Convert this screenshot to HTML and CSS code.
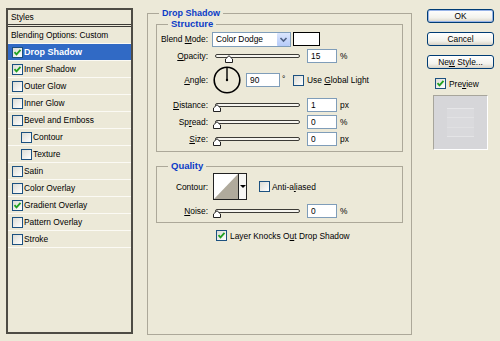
FILE: index.html
```html
<!DOCTYPE html>
<html>
    <head>
        <meta charset="UTF-8">
        <meta name="viewport" content="width=device-width, initial-scale=1.0">
        <title>Layer Style</title>
        <link rel="stylesheet" href="styles.css">
    </head>
    <body>
        <div class="dialog">
            <div class="style-list">
                <div class="list-head">Styles</div>
                <div class="list-row plain">Blending Options: Custom</div>
                <div class="list-row selected"><span class="check"><svg viewBox="0 0 9 9" width="9" height="9"><path d="M1.5 4.2l2 2.2 4-4.6" fill="none" stroke="#21a121" stroke-width="1.8"/></svg></span>Drop Shadow</div>
                <div class="list-row"><span class="check"><svg viewBox="0 0 9 9" width="9" height="9"><path d="M1.5 4.2l2 2.2 4-4.6" fill="none" stroke="#21a121" stroke-width="1.8"/></svg></span>Inner Shadow</div>
                <div class="list-row"><span class="check"></span>Outer Glow</div>
                <div class="list-row"><span class="check"></span>Inner Glow</div>
                <div class="list-row"><span class="check"></span>Bevel and Emboss</div>
                <div class="list-row sub"><span class="check"></span>Contour</div>
                <div class="list-row sub"><span class="check"></span>Texture</div>
                <div class="list-row"><span class="check"></span>Satin</div>
                <div class="list-row"><span class="check"></span>Color Overlay</div>
                <div class="list-row"><span class="check"><svg viewBox="0 0 9 9" width="9" height="9"><path d="M1.5 4.2l2 2.2 4-4.6" fill="none" stroke="#21a121" stroke-width="1.8"/></svg></span>Gradient Overlay</div>
                <div class="list-row"><span class="check"></span>Pattern Overlay</div>
                <div class="list-row"><span class="check"></span>Stroke</div>
            </div>

            <fieldset class="group main">
                <legend>Drop Shadow</legend>

                <fieldset class="group inner structure">
                    <legend>Structure</legend>
                    <div class="rows">
                        <div class="row">
                            <span class="label">Blend <u>M</u>ode:</span>
                            <div class="select">
                                <span class="select-text">Color Dodge</span>
                                <span class="select-arrow"><svg viewBox="0 0 13 13" width="13" height="13"><path d="M3.5 5l3 3 3-3" fill="none" stroke="#4d6185" stroke-width="1.6"/></svg></span>
                            </div>
                            <span class="swatch"></span>
                        </div>
                        <div class="row">
                            <span class="label"><u>O</u>pacity:</span>
                            <div class="slider"><span class="thumb" style="left: 9px"><svg viewBox="0 0 8 8" width="8" height="8"><path d="M0.5 7.5V4L4 0.7 7.5 4v3.5z" fill="#fff" stroke="#222"/></svg></span></div>
                            <input class="field" type="text" value="15">
                            <span class="unit">%</span>
                        </div>
                        <div class="row angle-row">
                            <span class="label"><u>A</u>ngle:</span>
                            <svg class="dial" viewBox="0 0 28 28" width="28" height="28"><circle cx="14" cy="14" r="12.8" fill="none" stroke="#000" stroke-width="1.6"/><path d="M14 14V2" stroke="#000" stroke-width="1.4"/><circle cx="14" cy="14" r="1.2" fill="#000"/></svg>
                            <input class="field wide" type="text" value="90">
                            <span class="deg">°</span>
                            <span class="check"></span>
                            <span class="check-text">Use <u>G</u>lobal Light</span>
                        </div>
                        <div class="row tall">
                            <span class="label"><u>D</u>istance:</span>
                            <div class="slider"><span class="thumb" style="left: -3px"><svg viewBox="0 0 8 8" width="8" height="8"><path d="M0.5 7.5V4L4 0.7 7.5 4v3.5z" fill="#fff" stroke="#222"/></svg></span></div>
                            <input class="field" type="text" value="1">
                            <span class="unit">px</span>
                        </div>
                        <div class="row">
                            <span class="label">Sp<u>r</u>ead:</span>
                            <div class="slider"><span class="thumb" style="left: -3px"><svg viewBox="0 0 8 8" width="8" height="8"><path d="M0.5 7.5V4L4 0.7 7.5 4v3.5z" fill="#fff" stroke="#222"/></svg></span></div>
                            <input class="field" type="text" value="0">
                            <span class="unit">%</span>
                        </div>
                        <div class="row">
                            <span class="label"><u>S</u>ize:</span>
                            <div class="slider"><span class="thumb" style="left: -3px"><svg viewBox="0 0 8 8" width="8" height="8"><path d="M0.5 7.5V4L4 0.7 7.5 4v3.5z" fill="#fff" stroke="#222"/></svg></span></div>
                            <input class="field" type="text" value="0">
                            <span class="unit">px</span>
                        </div>
                    </div>
                </fieldset>

                <fieldset class="group inner quality">
                    <legend>Quality</legend>
                    <div class="rows">
                        <div class="row contour-row">
                            <span class="label">Contour:</span>
                            <div class="contour">
                                <svg viewBox="0 0 24 25" width="24" height="25"><path d="M0 25L24 0V25z" fill="#b0aa9c"/></svg>
                                <span class="contour-drop"><svg viewBox="0 0 8 4" width="6" height="3"><path d="M0 0h8L4 4z" fill="#000"/></svg></span>
                            </div>
                            <span class="check aa"></span>
                            <span class="check-text">Anti-a<u>l</u>iased</span>
                        </div>
                        <div class="row noise-row">
                            <span class="label"><u>N</u>oise:</span>
                            <div class="slider"><span class="thumb" style="left: -3px"><svg viewBox="0 0 8 8" width="8" height="8"><path d="M0.5 7.5V4L4 0.7 7.5 4v3.5z" fill="#fff" stroke="#222"/></svg></span></div>
                            <input class="field" type="text" value="0">
                            <span class="unit">%</span>
                        </div>
                    </div>
                </fieldset>

                <div class="knock">
                    <span class="check"><svg viewBox="0 0 9 9" width="9" height="9"><path d="M1.5 4.2l2 2.2 4-4.6" fill="none" stroke="#21a121" stroke-width="1.8"/></svg></span>
                    <span class="check-text">Layer Knocks O<u>u</u>t Drop Shadow</span>
                </div>
            </fieldset>

            <div class="actions">
                <button class="btn default">OK</button>
                <button class="btn">Cancel</button>
                <button class="btn">Ne<u>w</u> Style...</button>
                <div class="preview-toggle">
                    <span class="check"><svg viewBox="0 0 9 9" width="9" height="9"><path d="M1.5 4.2l2 2.2 4-4.6" fill="none" stroke="#21a121" stroke-width="1.8"/></svg></span>
                    <span class="check-text">Pre<u>v</u>iew</span>
                </div>
                <div class="preview">
                    <div class="preview-swatch"></div>
                </div>
            </div>
        </div>
    </body>
</html>
```

FILE: styles.css
```css
body {
    margin: 0;
    background-color: #ece9d8;
    font-family: "Liberation Sans", Arial, sans-serif;
    font-size: 8.4px;
    color: #000;
}

u {
    text-decoration-thickness: 1px;
    text-underline-offset: 1px;
}

.dialog {
    display: flex;
    align-items: flex-start;
    padding: 7px 0 0 6px;
}

/* style list on the left */
.style-list {
    width: 127px;
    height: 326px;
    box-sizing: border-box;
    margin-top: 1px;
    border: 2px solid #4e4c45;
}

.list-head {
    height: 14px;
    line-height: 14px;
    padding-left: 3px;
    border-bottom: 3px double #3c3b36;
}

.list-row {
    display: flex;
    align-items: center;
    height: 16px;
    padding-left: 4px;
    border-bottom: 1px solid #fbfaf4;
    white-space: nowrap;
}

.list-row.plain {
    padding-left: 3px;
}

.list-row.sub {
    padding-left: 13px;
}

.list-row.selected {
    background-color: #316ac5;
    color: #fff;
    font-weight: bold;
    font-size: 9px;
}

.check {
    display: inline-flex;
    align-items: center;
    justify-content: center;
    flex: none;
    width: 11px;
    height: 11px;
    box-sizing: border-box;
    border: 1px solid #1c5180;
    background: linear-gradient(135deg, #dcdcd5, #ffffff);
    margin-right: 1px;
}

.check-text {
    margin-left: 2px;
    white-space: nowrap;
}

/* group boxes */
.group {
    margin: 0;
    padding: 0;
    min-width: 0;
    border: 1px solid #aca899;
}

.group legend {
    margin-left: 11px;
    padding: 0 3px;
    line-height: 12px;
    color: #0b3cc7;
    font-weight: bold;
    font-size: 9.5px;
}

.main {
    width: 265px;
    height: 328px;
    box-sizing: border-box;
    margin-left: 14px;
}

.main > legend {
    font-size: 9px;
}

.inner {
    margin: 0 8px;
    padding: 1px 0 4px;
}

.structure {
    margin-top: -1px;
}

.quality {
    margin-top: 8px;
}

.rows {
    display: flex;
    flex-direction: column;
    gap: 1px;
}

.row {
    display: flex;
    align-items: center;
    height: 16px;
}

.row.tall {
    height: 17px;
}

.angle-row {
    height: 30px;
}

.contour-row {
    height: 27px;
}

.rows .noise-row {
    height: 14px;
    margin-top: 3px;
}

.label {
    width: 51px;
    margin-right: 4px;
    text-align: right;
    white-space: nowrap;
}

/* controls */
.select {
    display: flex;
    align-items: center;
    justify-content: space-between;
    width: 79px;
    height: 15px;
    box-sizing: border-box;
    border: 1px solid #7f9db9;
    background-color: #fff;
    padding-left: 3px;
}

.select-arrow {
    display: flex;
    width: 13px;
    height: 13px;
    background: linear-gradient(#dbe6fe, #b6cbf9);
    border-radius: 1px;
}

.swatch {
    width: 27px;
    height: 14px;
    box-sizing: border-box;
    margin-left: 2px;
    border: 1px solid #000;
    background-color: #fff;
}

.slider {
    position: relative;
    width: 85px;
    height: 4px;
    box-sizing: border-box;
    margin-left: 3px;
    border: 1px solid #3c3b36;
    border-radius: 2px;
    background-color: #f6f5ef;
}

.thumb {
    position: absolute;
    top: 0;
    display: flex;
}

.field {
    width: 30px;
    height: 14px;
    box-sizing: border-box;
    margin: 0 0 0 7px;
    padding: 0 3px;
    border: 1px solid #7f9db9;
    font: inherit;
    color: #000;
    background-color: #fff;
}

.field.wide {
    width: 34px;
    margin-left: 5px;
}

.unit {
    margin-left: 3px;
}

.dial {
    flex: none;
    margin-left: 1px;
}

.deg {
    width: 11px;
    margin-left: 2px;
    align-self: flex-start;
    margin-top: 9px;
}

.contour {
    display: flex;
    width: 34px;
    height: 27px;
    box-sizing: border-box;
    margin-left: 1px;
    border: 1px solid #222;
    background-color: #fff;
}

.contour-drop {
    display: flex;
    align-items: center;
    justify-content: center;
    flex: 1;
    border-left: 1px solid #222;
    background-color: #f7f7f4;
}

.check.aa {
    margin-left: 12px;
    margin-right: 0;
}

.knock {
    display: flex;
    align-items: center;
    height: 11px;
    margin-top: 7px;
    padding-left: 68px;
}

/* buttons on the right */
.actions {
    display: flex;
    flex-direction: column;
    width: 67px;
    margin-left: 15px;
    margin-top: 2px;
}

.btn {
    height: 14px;
    margin: 0 0 9px;
    padding: 0;
    border: 1px solid #003c74;
    border-radius: 3px;
    background: linear-gradient(#ffffff, #f3f2ec 65%, #d8d3c7);
    font: inherit;
    line-height: 12px;
    color: #000;
}

.btn.default {
    box-shadow: inset 0 0 0 1px #98b4e8;
}

.preview-toggle {
    display: flex;
    align-items: center;
    height: 11px;
    padding-left: 8px;
}

.preview {
    display: flex;
    align-items: center;
    justify-content: center;
    width: 55px;
    height: 55px;
    box-sizing: border-box;
    margin: 6px 0 0 6px;
    border: 1px solid;
    border-color: #a7a59b #ffffff #ffffff #a7a59b;
    background-color: #d6d6d9;
}

.preview-swatch {
    width: 27px;
    height: 29px;
    box-sizing: border-box;
    border-top: 1px solid #e6e6e8;
    border-bottom: 1px solid #e4e4e6;
    background: linear-gradient(#dadadd 0 8px, #e2e2e4 8px 9px, #dadadd 9px 18px, #e0e0e2 18px 19px, #d9d9dc 19px);
}
```
